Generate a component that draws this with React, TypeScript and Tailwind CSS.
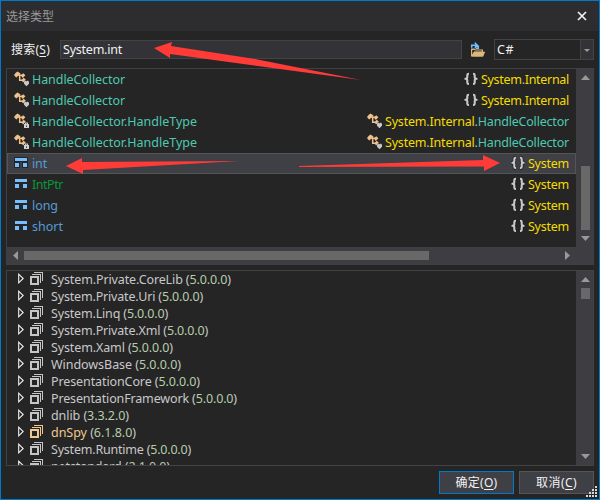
import { useLayoutEffect, useRef, useState, type ReactNode } from "react";

/* Text that spreads its letters over an exact advance width. */
function Fit({ w, children, className = "" }: { w: number; children: ReactNode; className?: string }) {
  const ref = useRef<HTMLSpanElement>(null);
  const [gap, setGap] = useState(0);
  useLayoutEffect(() => {
    const el = ref.current;
    if (!el) return;
    const n = Array.from(el.textContent ?? "").length;
    const prev = el.style.letterSpacing;
    el.style.letterSpacing = "0px";
    const natural = el.getBoundingClientRect().width;
    el.style.letterSpacing = prev;
    setGap((w - natural) / n);
  }, [w]);
  return (
    <span ref={ref} className={"inline-block shrink-0 whitespace-pre " + className} style={{ letterSpacing: gap + "px" }}>
      {children}
    </span>
  );
}

function ClassIcon({ badge }: { badge: "heart" | "lock" }) {
  return (
    <svg width="16" height="16" viewBox="0 0 16 16" className="shrink-0">
      <path d="M0 4 1.8 1.8 3.6.6 5 1.4 6.5 2.4 5.6 4 3.6 5.2 2.6 6.4 1.4 5.8Z" fill="#efc28b" />
      <path d="M4.5 4.2H8M5.7 4.5V9.2H8.5" fill="none" stroke="#efc28b" strokeWidth="1.5" />
      <path d="M6.8 4.6 9.2 2.2 11.4 4.2 8.8 7ZM7.4 9.2 9.6 6.8 11.8 8.6 9.2 11.4Z" fill="#efc28b" />
      {badge === "heart" ? (
        <path d="M12.5 15.2 10 12.8V10.8L11 9.8h1l.5.6.5-.6h1l1 1v2Z" fill="#c8c8c8" />
      ) : (
        <path fillRule="evenodd" d="M10 11h1V9.6h3V11h1v4h-5ZM12 10.4V11h1v-.6ZM12 12.4v1.3h1v-1.3Z" fill="#d0d0d0" />
      )}
    </svg>
  );
}

function StructIcon() {
  return (
    <svg width="14" height="12" viewBox="0 0 14 12" className="shrink-0" shapeRendering="crispEdges">
      <path d="M0 0h14v11H8V5H6v6H0Z" fill="#252526" />
      <path d="M1 1h12v3H1ZM1 6h4v4H1ZM9 6h4v4H9Z" fill="#75beff" />
    </svg>
  );
}

function BracesIcon() {
  const d = "M5 1.7H4.6Q3.3 1.7 3.3 3V5.2Q3.3 6.6 1.4 6.8 3.3 7 3.3 8.4V10.7Q3.3 12 4.6 12H5M9 1.7h.4Q10.7 1.7 10.7 3V5.2q0 1.4 1.9 1.6-1.9 .2-1.9 1.6v2.3q0 1.3-1.3 1.3H9";
  return (
    <svg width="14" height="14" viewBox="0 0 14 14" className="-mt-px shrink-0">
      <g fill="none" strokeLinejoin="round">
        <path d={d} stroke="#202022" strokeWidth="3.6" />
        <path d={d} stroke="#c8c8c8" strokeWidth="2.1" />
      </g>
    </svg>
  );
}

function AssemblyIcon({ color }: { color: string }) {
  return (
    <svg width="14" height="14" viewBox="0 0 14 14" className="shrink-0" shapeRendering="crispEdges" fill={color}>
      <path fillRule="evenodd" d="M0 4h9v9H0ZM2 6v5h5V6Z" />
      <path d="M2 2h9v9h-1V3H2ZM4 0h9v9h-1V1H4Z" />
    </svg>
  );
}

function Arrow({ dir }: { dir: "up" | "down" | "left" | "right" }) {
  const d = { up: "M0 5 4.5 0 9 5Z", down: "M0 0H9L4.5 5Z", left: "M5 0V9L0 4.5Z", right: "M0 0 5 4.5 0 9Z" }[dir];
  const flat = dir === "up" || dir === "down";
  return (
    <svg width={flat ? 9 : 5} height={flat ? 5 : 9} className="block shrink-0">
      <path d={d} fill="#999999" />
    </svg>
  );
}

type Item = { name: string; w: number; kind: "heart" | "lock" | "struct"; color: string; ns: "internal" | "nested" | "system"; selected?: boolean };

const items: Item[] = [
  { name: "HandleCollector", w: 93, kind: "heart", color: "text-[#4ec9b0]", ns: "internal" },
  { name: "HandleCollector", w: 93, kind: "heart", color: "text-[#4ec9b0]", ns: "internal" },
  { name: "HandleCollector.HandleType", w: 165, kind: "lock", color: "text-[#4ec9b0]", ns: "nested" },
  { name: "HandleCollector.HandleType", w: 165, kind: "lock", color: "text-[#4ec9b0]", ns: "nested" },
  { name: "int", w: 15, kind: "struct", color: "text-[#569cd6]", ns: "system", selected: true },
  { name: "IntPtr", w: 31, kind: "struct", color: "text-[#079839]", ns: "system" },
  { name: "long", w: 26, kind: "struct", color: "text-[#569cd6]", ns: "system" },
  { name: "short", w: 31, kind: "struct", color: "text-[#569cd6]", ns: "system" },
];

const assemblies: [string, string, number][] = [
  ["System.Private.CoreLib", "5.0.0.0", 180],
  ["System.Private.Uri", "5.0.0.0", 152],
  ["System.Linq", "5.0.0.0", 117],
  ["System.Private.Xml", "5.0.0.0", 157],
  ["System.Xaml", "5.0.0.0", 122],
  ["WindowsBase", "5.0.0.0", 130],
  ["PresentationCore", "5.0.0.0", 149],
  ["PresentationFramework", "5.0.0.0", 186],
  ["dnlib", "3.3.2.0", 78],
  ["dnSpy", "6.1.8.0", 85],
  ["System.Runtime", "5.0.0.0", 140],
  ["netstandard", "2.1.0.0", 119],
];

function TypeRow({ item }: { item: Item }) {
  return (
    <div className={"flex h-[21px] items-center border pl-1.5 pr-[6px] " + (item.selected ? "border-[#555558] bg-[#3f3f46]" : "border-transparent")}>
      <div className="-mt-px flex w-[18px] shrink-0 items-center">{item.kind === "struct" ? <StructIcon /> : <ClassIcon badge={item.kind} />}</div>
      <Fit w={item.w} className={item.color}>{item.name}</Fit>
      <div className="ml-auto flex items-center text-[#f5dc00]">
        {item.ns === "nested" ? <div className="-mt-px mr-[2px] w-[16px]"><ClassIcon badge="heart" /></div> : <div className="mr-[3px]"><BracesIcon /></div>}
        {item.ns === "system" && <Fit w={41}>System</Fit>}
        {item.ns === "internal" && <Fit w={88}>System<span className="text-[#b4b4b4]">.</span>Internal</Fit>}
        {item.ns === "nested" && (
          <Fit w={184}>
            System<span className="text-[#b4b4b4]">.</span>Internal<span className="text-[#b4b4b4]">.</span>
            <span className="text-[#4ec9b0]">HandleCollector</span>
          </Fit>
        )}
      </div>
    </div>
  );
}

export default function App() {
  return (
    <div className="relative flex h-[500px] w-[600px] flex-col overflow-hidden border border-[#007acc] bg-[#252526] font-['Noto_Sans','Noto_Sans_CJK_SC',sans-serif] text-[12.5px] leading-[17px] text-[#f1f1f1]">
      <header className="flex h-[30px] shrink-0 items-center bg-[#2d2d30] pl-[5px] pr-[12px]">
        <Fit w={48} className="text-[12px] text-[#999999]">选择类型</Fit>
        <svg width="10" height="10" viewBox="0 0 10 10" className="-mt-px ml-auto">
          <path d="M1 1 9 9M9 1 1 9" stroke="#f1f1f1" strokeWidth="1.7" />
        </svg>
      </header>

      <div className="flex h-[37px] shrink-0 items-start pl-[10px] pr-[5px] pt-[8px]">
        <Fit w={39} className="mt-0.5 text-[12px]">搜索(<span className="underline underline-offset-2">S</span>)</Fit>
        <div className="ml-[10px] mt-px flex h-[19px] w-[402px] items-center border border-[#434346] bg-[#333337] pl-[2px]">
          <Fit w={59}>System.int</Fit>
        </div>
        <svg width="16" height="16" viewBox="0 0 16 16" className="ml-[8px] mt-[3px]">
          <path d="M1 6.5H4.5L5.5 7.5H13V10H15L13 14.5H1Z" fill="#dcb67a" />
          <path d="M2.2 8V12.5L4 9.4H11.8V8.6H5.3L4.6 8Z" fill="#252526" />
          <path d="M4.5 9.8H15L13 14.5H2.2Z" fill="#dcb67a" />
          <path d="M1.7 5.8V3.2H6.5M4.8 .8 7.3 3.2 4.8 5.6M8.3 3.5V6.2H5.6" fill="none" stroke="#75beff" strokeWidth="1.5" />
        </svg>
        <div className="ml-auto flex h-[21px] w-[100px] border border-[#434346] bg-[#252526]">
          <div className="flex flex-1 items-center pl-[2px]"><Fit w={17}>C#</Fit></div>
          <div className="flex w-[13px] items-center justify-center border-l border-[#434346] bg-[#333337]">
            <svg width="6" height="3" className="mt-px"><path d="M0 0h6L3 3Z" fill="#999999" /></svg>
          </div>
        </div>
      </div>

      <section className="mx-[5px] flex h-[197px] shrink-0 flex-col border border-[#3f3f46]">
        <div className="flex h-[178px]">
          <div className="w-[569px]">
            {items.map((item, i) => <TypeRow key={i} item={item} />)}
          </div>
          <div className="flex flex-1 flex-col items-center bg-[#3e3e42] pl-px pt-[6px]">
            <Arrow dir="up" />
            <div className="mt-[86px] h-[64px] w-[9px] bg-[#686868]" />
            <div className="h-[6px]" />
            <Arrow dir="down" />
          </div>
        </div>
        <div className="flex flex-1 items-center bg-[#3e3e42] pl-[6px]">
          <Arrow dir="left" />
          <div className="ml-[6px] h-[9px] w-[405px] bg-[#686868]" />
          <div className="w-[136px]" />
          <Arrow dir="right" />
        </div>
      </section>

      <section className="mx-[5px] mt-[5px] flex h-[196px] shrink-0 overflow-hidden border border-[#434346]">
        <div className="w-[569px] shrink-0">
          {assemblies.map(([name, version, w]) => (
            <div key={name} className="flex h-[17px] items-center pl-[11px] text-[#c8c8c8]">
              <svg width="7" height="11" viewBox="0 0 7 11" className="mb-[3px] shrink-0">
                <path d="M.7 1.2V9.8L5.2 5.5Z" fill="none" stroke="#f1f1f1" strokeWidth="1.1" />
              </svg>
              <div className="mb-px ml-[5px] flex w-[21px]">
                <AssemblyIcon color={name === "dnSpy" ? "#efc98e" : "#c5c5c5"} />
              </div>
              <Fit w={w}>
                <span className={name === "dnSpy" ? "text-[#efc98e]" : ""}>{name}</span> (<span className="text-[#b5cea8]">{version}</span>)
              </Fit>
            </div>
          ))}
        </div>
        <div className="flex flex-1 flex-col items-center bg-[#3e3e42] pb-[6px] pl-px pt-[6px]">
          <Arrow dir="up" />
          <div className="mt-[6px] h-[11px] w-[9px] bg-[#686868]" />
          <div className="mt-auto"><Arrow dir="down" /></div>
        </div>
      </section>

      <footer className="flex justify-end gap-[5px] pr-[5px] pt-[5px] text-[12px]">
        <button className="flex h-[23px] w-[75px] items-center justify-center border border-[#007acc] bg-[#3f3f46]">
          <Fit w={42}>确定(<span className="underline underline-offset-2">O</span>)</Fit>
        </button>
        <button className="flex h-[23px] w-[75px] items-center justify-center border border-[#555555] bg-[#3f3f46]">
          <Fit w={41}>取消(<span className="underline underline-offset-2">C</span>)</Fit>
        </button>
      </footer>

      <svg width="12" height="12" className="absolute bottom-[1px] right-[1px]" shapeRendering="crispEdges">
        <path d="M9 0h2v2H9ZM6 3h2v2H6ZM9 3h2v2H9ZM3 6h2v2H3ZM6 6h2v2H6ZM9 6h2v2H9ZM0 9h2v2H0ZM3 9h2v2H3ZM6 9h2v2H6ZM9 9h2v2H9Z" fill="#d8d8d8" />
      </svg>

      <svg width="600" height="500" viewBox="0 0 600 500" className="pointer-events-none absolute -left-px -top-px">
        <g fill="#ff3b38">
          <path d="M154 48 172 42 171 46 255 59 361 80 170 54 170 58Z" />
          <path d="M66 166 82 158 82 162 239 161 83 170 83 174Z" />
          <path d="M500 163 483 155 483 160 299 166 299 167 484 166.5 484 171Z" />
        </g>
      </svg>
    </div>
  );
}
